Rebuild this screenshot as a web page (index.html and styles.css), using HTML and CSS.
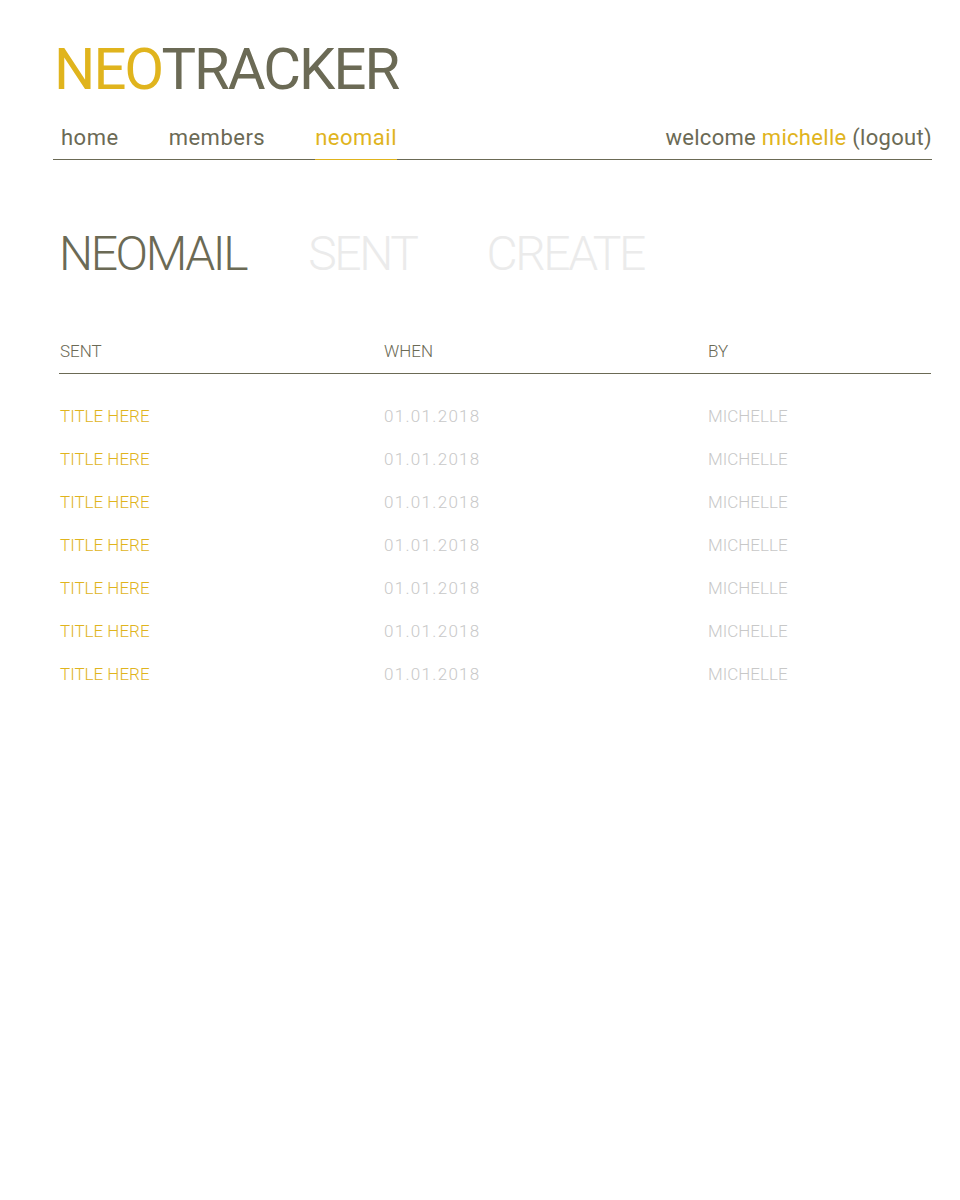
FILE: index.html
```
<!DOCTYPE html>
<html>
<head>
<meta charset="utf-8">
<link rel="stylesheet" href="styles.css">
</head>
<body>
<div class="page">
  <header class="brand"><span class="neo">NEO</span>TRACKER</header>
  <nav class="nav">
    <div class="links">
      <a class="link">home</a>
      <a class="link">members</a>
      <a class="link active">neomail</a>
    </div>
    <div class="welcome">welcome <span class="user">michelle</span> (logout)</div>
  </nav>
  <div class="tabs">
    <span class="tab on">NEOMAIL</span>
    <span class="tab">SENT</span>
    <span class="tab last">CREATE</span>
  </div>
  <div class="table">
    <div class="thead">
      <span>SENT</span><span>WHEN</span><span>BY</span>
    </div>
    <div class="row"><span class="title">TITLE HERE</span><span class="muted date">01.01.2018</span><span class="muted">MICHELLE</span></div>
    <div class="row"><span class="title">TITLE HERE</span><span class="muted date">01.01.2018</span><span class="muted">MICHELLE</span></div>
    <div class="row"><span class="title">TITLE HERE</span><span class="muted date">01.01.2018</span><span class="muted">MICHELLE</span></div>
    <div class="row"><span class="title">TITLE HERE</span><span class="muted date">01.01.2018</span><span class="muted">MICHELLE</span></div>
    <div class="row"><span class="title">TITLE HERE</span><span class="muted date">01.01.2018</span><span class="muted">MICHELLE</span></div>
    <div class="row"><span class="title">TITLE HERE</span><span class="muted date">01.01.2018</span><span class="muted">MICHELLE</span></div>
    <div class="row"><span class="title">TITLE HERE</span><span class="muted date">01.01.2018</span><span class="muted">MICHELLE</span></div>
  </div>
</div>
</body>
</html>
```
FILE: styles.css
```
html, body {
  margin: 0;
  background: #fff;
}
body {
  font-family: Roboto, "Liberation Sans", Arial, sans-serif;
  color: #6b6a55;
}
.page {
  padding: 39px 28px 0 53px;
}
.brand {
  font-size: 58px;
  line-height: 60px;
  letter-spacing: -2px;
  padding-left: 1px;
  color: #6b6a55;
}
.neo { color: #e0b41d; }
.nav {
  margin-top: 21px;
  display: flex;
  justify-content: space-between;
  align-items: flex-end;
  border-bottom: 1px solid #6b6a55;
}
.links {
  display: flex;
  gap: 50px;
  padding-left: 8px;
}
.link {
  font-size: 22px;
  line-height: 36px;
  letter-spacing: 0.5px;
  padding-bottom: 3px;
  color: #6b6a55;
}
.link.active {
  color: #e0b41d;
  border-bottom: 1px solid #e0b41d;
  margin-bottom: -1px;
}
.welcome {
  font-size: 22px;
  line-height: 36px;
  letter-spacing: 0.3px;
  padding-bottom: 3px;
}
.user { color: #e0b41d; }
.tabs {
  display: flex;
  gap: 62px;
  margin-top: 66px;
  padding-left: 6px;
}
.tab {
  font-size: 48px;
  font-weight: 300;
  line-height: 56px;
  color: #ebebeb;
  letter-spacing: -2.4px;
}
.tab.last { margin-left: 8px; }
.tab.on { color: #6b6a55; }
.table {
  margin-top: 57px;
  margin-left: 6px;
  margin-right: 1px;
}
.thead, .row {
  display: grid;
  grid-template-columns: 324px 324px 1fr;
  font-size: 17px;
  font-weight: 300;
  padding-left: 1px;
}
.thead {
  color: #6b6a55;
  line-height: 24px;
  padding-bottom: 10px;
  border-bottom: 1px solid #6b6a55;
  margin-bottom: 21px;
}
.row {
  height: 43px;
  line-height: 42px;
}
.title { color: #e0b41d; }
.muted { color: #c8c8c8; }
.date { letter-spacing: 1.3px; }
```
